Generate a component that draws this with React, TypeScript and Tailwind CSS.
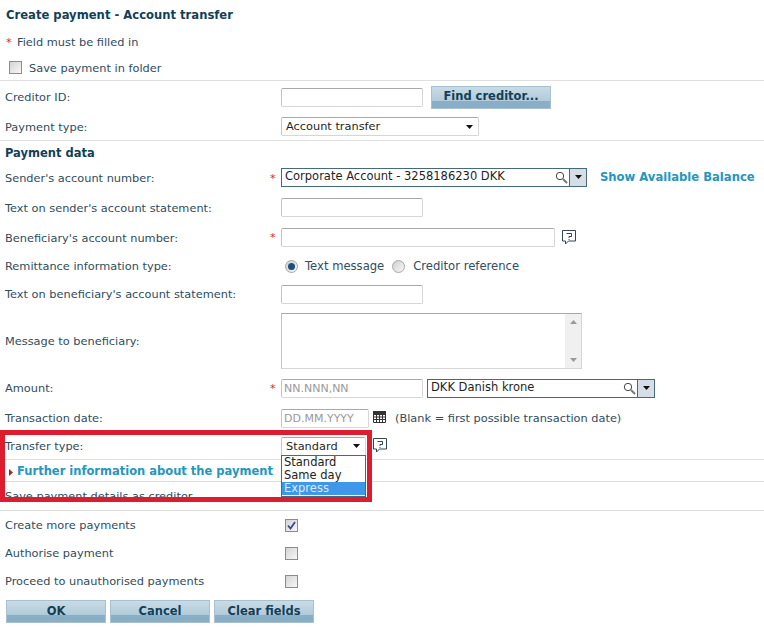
const LABEL = 'text-[#2f4d5d]';

function Star() {
  return <span className="text-[#d9252f] text-[11px] leading-none">*</span>;
}

function Row({ h, label, star, bold, children }: { h: number; label?: string; star?: boolean; bold?: boolean; children?: React.ReactNode }) {
  return (
    <div className="flex items-center pl-[5px]" style={{ height: h }}>
      <div className={`w-[265px] shrink-0 pt-[2px] ${bold ? 'font-bold text-[#123f58] text-[11.5px]' : LABEL}`}>{label}</div>
      <div className="w-[11px] shrink-0 flex justify-start">{star && <Star />}</div>
      <div className="flex items-center">{children}</div>
    </div>
  );
}

function Divider() {
  return <div className="h-px bg-[#dfdfdf]" />;
}

function Input({ w, placeholder }: { w: string; placeholder?: string }) {
  return (
    <div className={`${w} h-[19px] border border-[#d6d6d6] border-t-[#a9a9a9] border-l-[#c4c4c4] rounded-[2px] bg-white px-[2px] flex items-center text-[#9a9a9a] text-[11px]`}>
      {placeholder}
    </div>
  );
}

function Caret({ className = '' }: { className?: string }) {
  return (
    <svg width="7" height="4" viewBox="0 0 7 4" className={className}>
      <path d="M0 0h7L3.500 4z" fill="#111" />
    </svg>
  );
}

function Select({ w, value }: { w: string; value: string }) {
  return (
    <div className={`${w} h-[19px] border border-[#d6d6d6] border-t-[#a9a9a9] border-l-[#c4c4c4] rounded-[2px] bg-white pl-1 pr-[5px] flex items-center justify-between text-[#1f1f1f]`}>
      <span className="pt-[1px]">{value}</span>
      <Caret />
    </div>
  );
}

function Combo({ w, value }: { w: string; value: string }) {
  return (
    <div className={`${w} h-[19px] border border-[#47697a] bg-white flex items-center text-[#1f1f1f] text-[11.5px]`}>
      <span className="flex-1 pl-[3px]">{value}</span>
      <svg width="13" height="13" viewBox="0 0 13 13" className="mr-[1px]">
        <circle cx="5" cy="5" r="3.7" fill="#fff" stroke="#444" />
        <path d="M8 8l4 4" stroke="#777" strokeWidth="2" />
      </svg>
      <div className="w-[17px] h-full bg-[#d5dee5] border-l border-[#47697a] flex items-center justify-center">
        <Caret />
      </div>
    </div>
  );
}

function Help() {
  return (
    <svg width="14" height="15" viewBox="0 0 14 15" className="ml-[7px] -mt-[1px]">
      <path d="M.5.500h13v10.500H6.500L3.500 14v-3H.5z" fill="#fff" stroke="#33464f" />
      <path d="M4.500 3.500h5v3H7v1.500" fill="none" stroke="#33464f" />
      <path d="M6.500 9h1v1h-1z" fill="#33464f" />
    </svg>
  );
}

function Check({ checked }: { checked?: boolean }) {
  return (
    <div className="w-[13px] h-[13px] border border-[#8c8c8c] bg-gradient-to-br from-[#d4d4d4] to-[#f7f7f7] flex items-center justify-center">
      {checked && (
        <svg width="9" height="9" viewBox="0 0 9 9">
          <path d="M1 4.500l2.500 3L8 1" fill="none" stroke="#3a4a8c" strokeWidth="1.800" />
        </svg>
      )}
    </div>
  );
}

function Radio({ on }: { on?: boolean }) {
  return (
    <div className="w-[13px] h-[13px] rounded-full border border-[#a8a8a8] bg-gradient-to-br from-[#cfcfcf] to-[#f7f7f7] flex items-center justify-center">
      {on && <div className="w-[7px] h-[7px] rounded-full bg-[#1f4e79]" />}
    </div>
  );
}

function Button({ w, children }: { w: string; children: React.ReactNode }) {
  return (
    <div className={`${w} h-[23px] relative border border-[#a9c0ce] bg-gradient-to-b from-[#c9dbe6] to-[#a5c3d4] font-bold text-[#123f58] text-[11.5px] flex items-center justify-center overflow-hidden`}>
      <div className="absolute left-0 right-0 bottom-0 h-[7px] bg-[#88afc5]" />
      <span className="relative">{children}</span>
    </div>
  );
}

export default function App() {
  return (
    <div className="relative w-[764px] h-[629px] overflow-hidden bg-white text-[11.35px] leading-none font-['DejaVu_Sans',sans-serif]">
      <div className="h-[31px] flex items-center pl-[6px] pt-[1px] font-bold text-[#123f58] text-[11.6px]">Create payment - Account transfer</div>
      <div className={`h-[23px] flex items-center pl-[6px] ${LABEL}`}>
        <span className="text-[#d9252f] w-[11px]">*</span>Field must be filled in
      </div>
      <div className={`h-[26px] flex items-center pl-[9px] ${LABEL}`}>
        <Check />
        <span className="ml-[7px] pt-[3px]">Save payment in folder</span>
      </div>
      <Divider />

      <Row h={32} label="Creditor ID:">
        <Input w="w-[142px]" />
        <div className="w-2" />
        <Button w="w-[120px]">Find creditor...</Button>
      </Row>
      <Row h={27} label="Payment type:">
        <Select w="w-[198px]" value="Account transfer" />
      </Row>
      <Divider />
      <Row h={23} label="Payment data" bold />
      <Row h={28} label="Sender's account number:" star>
        <Combo w="w-[306px] -mt-[2px]" value="Corporate Account - 3258186230 DKK" />
        <a className="ml-[13px] font-bold text-[#2596be] text-[11.6px] whitespace-nowrap">Show Available Balance</a>
      </Row>
      <Row h={31} label="Text on sender's account statement:">
        <Input w="w-[142px]" />
      </Row>
      <Row h={29} label="Beneficiary's account number:" star>
        <Input w="w-[274px]" />
        <Help />
      </Row>
      <Row h={28} label="Remittance information type:">
        <div className={`ml-[4px] flex items-center text-[11.6px] ${LABEL}`}>
          <Radio on />
          <span className="ml-[7px] pt-[2px]">Text message</span>
          <div className="ml-[8px]"><Radio /></div>
          <span className="ml-[8px] pt-[2px]">Creditor reference</span>
        </div>
      </Row>
      <Row h={28} label="Text on beneficiary's account statement:">
        <Input w="w-[142px]" />
      </Row>
      <Row h={65} label="Message to beneficiary:">
        <div className="w-[301px] h-[56px] border border-[#d6d6d6] border-t-[#a9a9a9] border-l-[#c4c4c4] bg-white flex justify-end">
          <div className="w-4 h-full bg-[#f0f0f0] flex flex-col items-center justify-between py-[6px]">
            <svg width="7" height="4" viewBox="0 0 7 4"><path d="M0 4L3.500 0 7 4z" fill="#9a9a9a" /></svg>
            <svg width="7" height="4" viewBox="0 0 7 4"><path d="M0 0l3.500 4L7 0z" fill="#9a9a9a" /></svg>
          </div>
        </div>
      </Row>
      <Row h={30} label="Amount:" star>
        <Input w="w-[142px]" placeholder="NN.NNN,NN" />
        <div className="w-1" />
        <Combo w="w-[228px]" value="DKK Danish krone" />
      </Row>
      <Row h={30} label="Transaction date:">
        <Input w="w-[88px]" placeholder="DD.MM.YYYY" />
        <svg width="13" height="12" viewBox="0 0 13 12" className="ml-[4px] -mt-[3px]">
          <path d="M.5.500h12v11H.5zM.5 3.500h12M.5 6h12M.5 8.500h12M3.500 3v8.500M6.500 3v8.500M9.500 3v8.500" fill="none" stroke="#333" />
          <path d="M0 0h13v3H0z" fill="#333" />
        </svg>
        <span className={`ml-[9px] pt-[2px] ${LABEL} whitespace-nowrap`}>(Blank = first possible transaction date)</span>
      </Row>
      <Row h={26} label="Transfer type:">
        <Select w="w-[85px]" value="Standard" />
        <Help />
      </Row>
      <Divider />
      <div className="h-[21px] flex items-center pl-[9px] pt-[3px] font-bold text-[#2596be] text-[11.5px]">
        <svg width="4" height="7" viewBox="0 0 4 7" className="mr-[4px]"><path d="M0 0l4 3.500L0 7z" fill="#9a2b2b" /></svg>
        Further information about the payment
      </div>
      <Divider />
      <Row h={28} label="Save payment details as creditor" />
      <Divider />
      <Row h={28} label="Create more payments">
        <div className="ml-[4px]"><Check checked /></div>
      </Row>
      <Row h={28} label="Authorise payment">
        <div className="ml-[4px]"><Check /></div>
      </Row>
      <Row h={28} label="Proceed to unauthorised payments">
        <div className="ml-[4px]"><Check /></div>
      </Row>
      <div className="mt-[5px] flex gap-1 pl-[6px]">
        <Button w="w-[100px]">OK</Button>
        <Button w="w-[100px]">Cancel</Button>
        <Button w="w-[100px]">Clear fields</Button>
      </div>

      {/* open dropdown list of Transfer type */}
      <div className="absolute left-[281px] top-[455px] w-[85px] h-[42px] border border-[#47697a] bg-white text-[#222] text-[11.5px] leading-[13px] pl-[2px] z-10">
        <div>Standard</div>
        <div>Same day</div>
        <div className="-ml-[2px] pl-[2px] bg-[#3f97ea] text-[#dcecf9]">Express</div>
      </div>
      {/* red annotation around the dropdown */}
      <div className="absolute left-0 top-[430px] w-[372px] h-[72px] border-[5px] border-[#dd1c2f] z-20 pointer-events-none" />
    </div>
  );
}
